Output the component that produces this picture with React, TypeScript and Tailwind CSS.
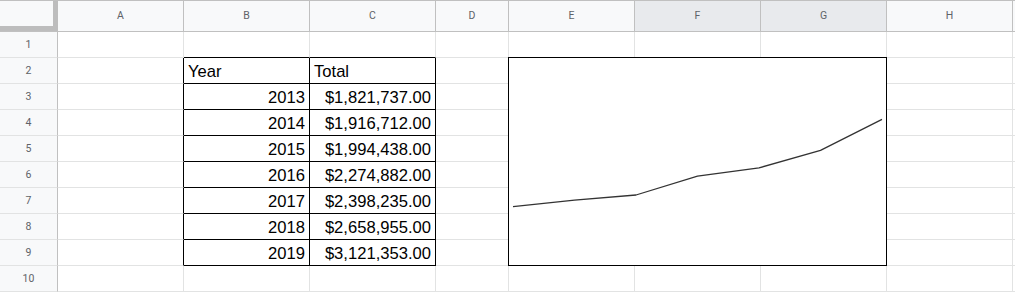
import React from 'react';

type Col = { key: string; width: string; active?: boolean };

const columns: Col[] = [
  { key: 'A', width: 'w-[126px]' },
  { key: 'B', width: 'w-[126px]' },
  { key: 'C', width: 'w-[126px]' },
  { key: 'D', width: 'w-[73px]' },
  { key: 'E', width: 'w-[126px]' },
  { key: 'F', width: 'w-[126px]', active: true },
  { key: 'G', width: 'w-[126px]', active: true },
  { key: 'H', width: 'w-[126px]' },
];

const totals: [number, number][] = [
  [2013, 1821737],
  [2014, 1916712],
  [2015, 1994438],
  [2016, 2274882],
  [2017, 2398235],
  [2018, 2658955],
  [2019, 3121353],
];

const money = (v: number) =>
  '$' + v.toLocaleString('en-US', { minimumFractionDigits: 2, maximumFractionDigits: 2 });

// cell contents keyed by row number + column letter
const cellText = (row: number, col: string): { text: string; right?: boolean } | null => {
  if (row === 2 && col === 'B') return { text: 'Year' };
  if (row === 2 && col === 'C') return { text: 'Total' };
  const entry = totals[row - 3];
  if (!entry) return null;
  if (col === 'B') return { text: String(entry[0]), right: true };
  if (col === 'C') return { text: money(entry[1]), right: true };
  return null;
};

const inTable = (row: number) => row >= 2 && row <= 9;

const Cell: React.FC<{ row: number; col: Col }> = ({ row, col }) => {
  const rightBlack = inTable(row) && (col.key === 'A' || col.key === 'B' || col.key === 'C');
  const bottomBlack = row >= 1 && row <= 9 && (col.key === 'B' || col.key === 'C');
  const content = cellText(row, col.key);
  return (
    <div
      className={`${col.width} shrink-0 h-full border-r border-b flex items-end pb-[2px] px-[4px] text-[16.6px] leading-[19px] text-black ${
        rightBlack ? 'border-r-black' : 'border-r-[#e2e3e3]'
      } ${bottomBlack ? 'border-b-black' : 'border-b-[#e2e3e3]'} ${
        content?.right ? 'justify-end' : 'justify-start'
      }`}
    >
      {content?.text}
    </div>
  );
};

const LineChart: React.FC = () => {
  const base = totals[2][1];
  const pts = totals
    .map(([, v], i) => `${(4 + i * 61.5).toFixed(1)},${(137 - (v - base) * 6.717e-5).toFixed(1)}`)
    .join(' ');
  return (
    <div className="absolute left-[508px] top-[57px] w-[379px] h-[209px] border border-black bg-white">
      <svg width="377" height="207" viewBox="0 0 377 207" className="block">
        <polyline points={pts} fill="none" stroke="#333" strokeWidth={1.3} strokeLinejoin="round" />
      </svg>
    </div>
  );
};

const App: React.FC = () => {
  const rows = Array.from({ length: 10 }, (_, i) => i + 1);
  return (
    <div className="relative w-[1015px] h-[294px] overflow-hidden bg-white font-['Liberation_Sans',Arial,sans-serif]">
      {/* column letters */}
      <div className="flex h-[32px] border-t border-b border-[#c0c0c0] font-['Roboto',Arial,sans-serif] text-[10.5px] text-[#5f6368]">
        <div className="w-[58px] shrink-0 h-full bg-[#f8f9fa] border-r-[5px] border-b-[5px] border-[#bdbdbd]" />
        {columns.map(col => (
          <div
            key={col.key}
            className={`${col.width} shrink-0 h-full border-r border-[#c0c0c0] flex items-center justify-center ${
              col.active ? 'bg-[#e8eaed]' : 'bg-[#f8f9fa]'
            }`}
          >
            {col.key}
          </div>
        ))}
        <div className="flex-1 h-full bg-[#f8f9fa]" />
      </div>

      {rows.map(row => (
        <div key={row} className="flex h-[26px]">
          <div className="w-[58px] shrink-0 h-full bg-[#f8f9fa] border-r border-r-[#c0c0c0] border-b border-b-[#e2e3e3] flex items-center justify-center font-['Roboto',Arial,sans-serif] text-[10.5px] text-[#5f6368]">
            {row}
          </div>
          {columns.map(col => (
            <Cell key={col.key} row={row} col={col} />
          ))}
          <div className="flex-1 h-full border-b border-[#e2e3e3]" />
        </div>
      ))}

      <LineChart />
    </div>
  );
};

export default App;
